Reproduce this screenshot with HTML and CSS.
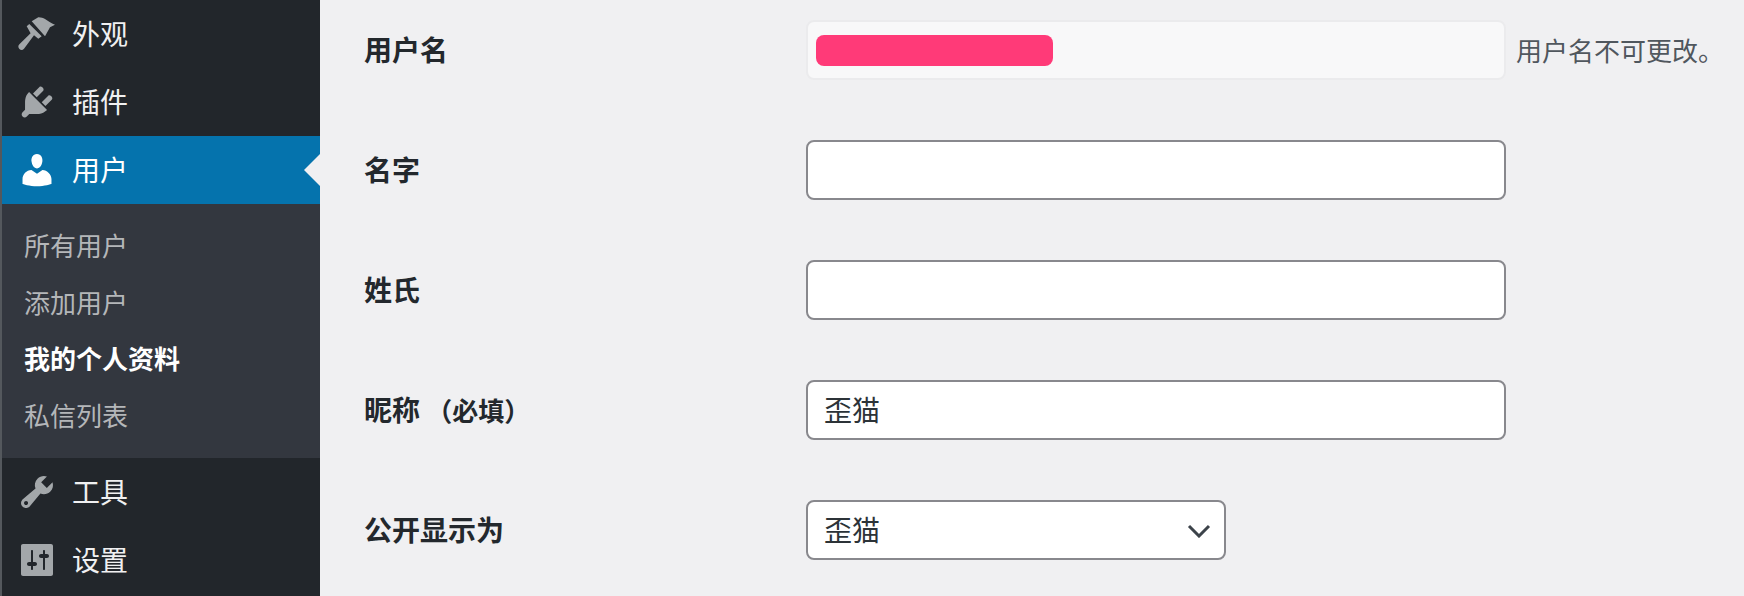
FILE: index.html
```html
<!DOCTYPE html>
<html>
<head>
  <meta charset="utf-8">
  <title>个人资料</title>
  <link rel="stylesheet" href="styles.css">
</head>
<body>
  <div class="sidebar">
    <a class="menu-item">
      <svg class="menu-icon" viewBox="0 0 20 20"><path d="M7.35 3.65L10.65 1.65C12 1.6 13 2 14 2.5 15.5 3.4 17 4.8 19 5.35L16.5 6.65 14 11.15zM4.85 6.15L6.15 5l6.2 6.15-1.7 1.2-2.15-1.7-5 6.7c-.7.8-1.6.8-2.3.1-.7-.7-.7-1.6 0-2.3L6.8 9.6z"/></svg>
      <span>外观</span>
    </a>
    <a class="menu-item">
      <svg class="menu-icon" viewBox="0 0 20 20"><path d="M13.11 4.36L9.87 7.6 8 5.73l3.24-3.24c.35-.34 1.05-.2 1.56.32.52.51.66 1.21.31 1.55zm-8 1.77l.91-1.12 9.01 9.01-1.19.84c-.71.71-2.63 1.16-3.82 1.16H6.14L4.9 17.26c-.59.59-1.54.59-2.12 0-.59-.58-.59-1.53 0-2.12l1.24-1.24v-3.88c0-1.13.4-3.19 1.09-3.89zm7.26 3.97l3.24-3.24c.34-.35 1.04-.21 1.55.31.52.51.66 1.21.31 1.55l-3.24 3.25z"/></svg>
      <span>插件</span>
    </a>
    <a class="menu-item active">
      <svg class="menu-icon" viewBox="0 0 20 20"><path d="M10 9.25c-2.27 0-2.73-3.44-2.73-3.44C7 4.02 7.82 2 9.97 2c2.16 0 2.98 2.02 2.71 3.81 0 0-.41 3.44-2.68 3.44zm0 2.57L12.72 10c2.39 0 4.52 2.33 4.52 4.53v2.49s-3.65 1.13-7.24 1.13c-3.65 0-7.24-1.13-7.24-1.13v-2.49c0-2.25 1.94-4.48 4.47-4.48z"/></svg>
      <span>用户</span>
    </a>
    <div class="submenu">
      <a class="submenu-item">所有用户</a>
      <a class="submenu-item">添加用户</a>
      <a class="submenu-item current">我的个人资料</a>
      <a class="submenu-item">私信列表</a>
    </div>
    <a class="menu-item">
      <svg class="menu-icon" viewBox="0 0 20 20"><path d="M16.68 9.77c-1.34 1.34-3.3 1.67-4.95.99l-5.41 6.52c-.99.99-2.59.99-3.58 0s-.99-2.59 0-3.57l6.52-5.42c-.68-1.65-.35-3.61.99-4.95 1.28-1.28 3.12-1.62 4.72-1.06l-2.89 2.89 2.82 2.82 2.86-2.87c.53 1.58.18 3.39-1.08 4.67zM3.81 16.21c.4.39 1.04.39 1.43 0 .4-.4.4-1.04 0-1.43-.39-.4-1.03-.4-1.43 0-.39.39-.39 1.03 0 1.43z"/></svg>
      <span>工具</span>
    </a>
    <a class="menu-item">
      <svg class="menu-icon" viewBox="0 0 20 20"><path d="M18 17V3c0-.55-.45-1-1-1H3c-.55 0-1 .45-1 1v14c0 .55.45 1 1 1h14c.55 0 1-.45 1-1zM8 11h1c.55 0 1 .45 1 1s-.45 1-1 1H8v1.5c0 .28-.22.5-.5.5s-.5-.22-.5-.5V13H6c-.55 0-1-.45-1-1s.45-1 1-1h1V5.5c0-.28.22-.5.5-.5s.5.22.5.5V11zm5-2h-1c-.55 0-1-.45-1-1s.45-1 1-1h1V5.5c0-.28.22-.5.5-.5s.5.22.5.5V7h1c.55 0 1 .45 1 1s-.45 1-1 1h-1v5.5c0 .28-.22.5-.5.5s-.5-.22-.5-.5V9z"/></svg>
      <span>设置</span>
    </a>
  </div>

  <div class="main">
    <div class="form-row">
      <div class="form-label">用户名</div>
      <div class="field field-disabled"><div class="redacted"></div></div>
      <div class="help-text">用户名不可更改。</div>
    </div>
    <div class="form-row">
      <div class="form-label">名字</div>
      <input class="field" type="text">
    </div>
    <div class="form-row">
      <div class="form-label">姓氏</div>
      <input class="field" type="text">
    </div>
    <div class="form-row">
      <div class="form-label">昵称 <span class="required">（必填）</span></div>
      <input class="field" type="text" value="歪猫">
    </div>
    <div class="form-row">
      <div class="form-label">公开显示为</div>
      <div class="select-wrap">
        <select class="field select-field">
          <option>歪猫</option>
        </select>
        <svg class="select-arrow" viewBox="0 0 24 14"><path d="M2 2l10 10L22 2"/></svg>
      </div>
    </div>
  </div>
</body>
</html>
```

FILE: styles.css
```css
html, body {
  height: 100%;
}

body {
  margin: 0;
  display: flex;
  overflow: hidden;
  background-color: #f0f0f2;
  color: #23282d;
  font-family: "Noto Sans CJK SC", "Liberation Sans", sans-serif;
}

.sidebar {
  width: 318px;
  flex-shrink: 0;
  border-left: 2px solid #54585d;
  background-color: #22262b;
}

.menu-item {
  position: relative;
  height: 68px;
  display: flex;
  align-items: center;
  gap: 15px;
  padding-left: 15px;
  font-size: 28px;
  color: #f0f0f1;
}

.menu-item span {
  margin-bottom: 2px;
}

.menu-icon {
  width: 40px;
  height: 40px;
  fill: #a3a7aa;
}

.menu-item.active {
  background-color: #0573ad;
  color: #fff;
}

.menu-item.active .menu-icon {
  fill: #fff;
}

.menu-item.active::after {
  content: "";
  position: absolute;
  right: 0;
  top: 50%;
  margin-top: -16px;
  border: 16px solid transparent;
  border-left-width: 0;
  border-right-color: #f0f0f2;
}

.submenu {
  height: 254px;
  padding: 13px 0 13px 22px;
  box-sizing: border-box;
  background-color: #33373f;
}

.submenu-item {
  display: block;
  height: 56.5px;
  line-height: 56px;
  font-size: 26px;
  color: #b4b6b9;
}

.submenu-item.current {
  color: #fff;
  font-weight: 700;
}

.main {
  flex: 1;
  padding: 20px 0 0 44px;
  display: flex;
  flex-direction: column;
  gap: 60px;
}

.form-row {
  display: flex;
  align-items: center;
  height: 60px;
}

.form-label {
  width: 442px;
  flex-shrink: 0;
  margin-bottom: 2px;
  font-size: 28px;
  font-weight: 600;
}

.required {
  font-size: 26px;
}

.field {
  width: 700px;
  height: 60px;
  box-sizing: border-box;
  margin: 0;
  padding: 0 16px 2px;
  border: 2px solid #88888d;
  border-radius: 8px;
  background-color: #fff;
  color: #2c3338;
  font-family: inherit;
  font-size: 28px;
  outline: none;
}

.field-disabled {
  display: flex;
  align-items: center;
  padding: 0 8px;
  border-color: #ebebed;
  background-color: #f8f8f9;
}

.redacted {
  width: 237px;
  height: 31px;
  border-radius: 8px;
  background-color: #ff3a78;
}

.help-text {
  margin-left: 10px;
  margin-bottom: 2px;
  font-size: 26px;
  color: #50575e;
  white-space: nowrap;
}

.select-wrap {
  position: relative;
  width: 420px;
  height: 60px;
}

.select-field {
  display: block;
  width: 100%;
  appearance: none;
}

.select-arrow {
  position: absolute;
  right: 15px;
  top: 24px;
  width: 24px;
  height: 14px;
  fill: none;
  stroke: #3c434a;
  stroke-width: 3;
}
```
